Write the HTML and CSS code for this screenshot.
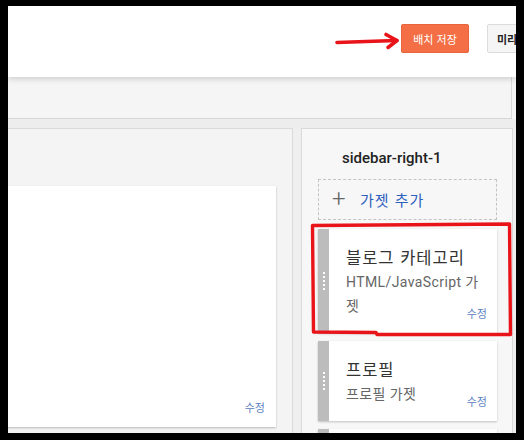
FILE: index.html
```html
<!DOCTYPE html>
<html lang="ko">
<head>
<meta charset="utf-8">
<title>레이아웃</title>
<link rel="stylesheet" href="styles.css">
</head>
<body>
<div class="frame">
  <header class="header">
    <button class="btn btn-save">배치 저장</button>
    <button class="btn btn-preview">미리보기</button>
  </header>
  <div class="toolbar"></div>
  <div class="band"></div>
  <div class="columns">
    <section class="main-panel">
      <div class="main-card">
        <a class="edit">수정</a>
      </div>
    </section>
    <aside class="sidebar">
      <h2 class="sidebar-title">sidebar-right-1</h2>
      <div class="add-gadget"><span class="plus">+</span><span class="add-text">가젯 추가</span></div>
      <div class="widget">
        <div class="handle"><span class="dots"></span></div>
        <div class="widget-body">
          <div class="widget-title">블로그 카테고리</div>
          <div class="widget-sub">HTML/JavaScript 가젯</div>
        </div>
        <a class="edit">수정</a>
      </div>
      <div class="widget">
        <div class="handle"><span class="dots"></span></div>
        <div class="widget-body">
          <div class="widget-title">프로필</div>
          <div class="widget-sub">프로필 가젯</div>
        </div>
        <a class="edit">수정</a>
      </div>
      <div class="widget">
        <div class="handle"><span class="dots"></span></div>
        <div class="widget-body">
          <div class="widget-title">&nbsp;</div>
          <div class="widget-sub">&nbsp;</div>
        </div>
      </div>
    </aside>
  </div>
  <svg class="annot" width="508" height="427" viewBox="0 0 508 427">
    <path d="M329 36.5 L358 35.5 L389 34.5" fill="none" stroke="#e8141a" stroke-width="3.6" stroke-linecap="round"/>
    <path d="M378 28.5 L389 34.5 L380 41.5" fill="none" stroke="#e8141a" stroke-width="3.6" stroke-linecap="round" stroke-linejoin="round"/>
    <path d="M304.5 219.5 L501.5 218 L502.5 328.5 L369 328.5 L368 326.5 L305.5 326 Z" fill="none" stroke="#e8141a" stroke-width="3.4" stroke-linejoin="round"/>
  </svg>
</div>
</body>
</html>
```

FILE: styles.css
```css
* { box-sizing: border-box; }
html, body { margin: 0; padding: 0; }
body {
  background: #000;
  width: 524px;
  height: 440px;
  overflow: hidden;
  font-family: Roboto, "Noto Sans CJK KR", sans-serif;
}
.frame {
  position: relative;
  margin: 6px 8px 0 8px;
  width: 508px;
  height: 427px;
  overflow: hidden;
  background: #f5f5f5;
}
.header {
  position: relative;
  z-index: 2;
  height: 71px;
  background: #fff;
  box-shadow: 0 2px 6px rgba(0,0,0,0.16);
  display: flex;
  align-items: flex-start;
  gap: 18px;
  padding: 18px 0 0 393px;
  white-space: nowrap;
}
.btn {
  flex: none;
  height: 29px;
  border-radius: 2px;
  font-family: "Noto Sans CJK KR", sans-serif;
  font-size: 11px;
  padding: 0;
  cursor: pointer;
}
.btn-save {
  width: 68px;
  background: #f46f45;
  border: 1px solid #e8643a;
  color: #fff;
}
.btn-preview {
  width: 64px;
  background: #f5f5f5;
  border: 1px solid #dcdcdc;
  color: #222;
  font-weight: 700;
  text-align: left;
  padding-left: 9px;
}
.toolbar {
  width: 504px;
  height: 42px;
  border-right: 1px solid #d9d9d9;
  border-bottom: 1px solid #d6d6d6;
  background: #f5f5f5;
}
.band {
  height: 9px;
  background: #ededed;
}
.columns {
  display: flex;
  gap: 8px;
  background: #efefef;
  height: 320px;
}
.main-panel {
  width: 285px;
  flex: none;
  border-top: 1px solid #dadada;
  border-right: 1px solid #dadada;
  background: #f4f4f4;
  padding-top: 57px;
}
.main-card {
  position: relative;
  margin-left: -20px;
  width: 288px;
  height: 241px;
  background: #fff;
  box-shadow: 0 1px 2px rgba(0,0,0,0.25);
}
.main-card .edit { right: 11px; bottom: 13px; }
.sidebar {
  width: 212px;
  flex: none;
  border: 1px solid #dadada;
  border-bottom: none;
  background: #f7f7f7;
  padding: 0 15px 0 16px;
}
.sidebar-title {
  margin: 19px 0 0 24px;
  font-size: 15px;
  line-height: 20px;
  font-weight: 500;
  color: #222;
}
.add-gadget {
  margin-top: 11px;
  height: 41px;
  border: 1px dashed #c4c4c4;
  display: flex;
  align-items: center;
  padding-left: 13px;
}
.plus {
  font-size: 24px;
  font-weight: 300;
  color: #666;
  line-height: 1;
  width: 28px;
  margin-top: -2px;
}
.add-text {
  font-family: "Noto Sans CJK KR", sans-serif;
  font-size: 15px;
  letter-spacing: 1px;
  color: #2e5fbd;
}
.widget {
  position: relative;
  display: flex;
  margin-top: 9px;
  background: #fff;
  box-shadow: 0 1px 2px rgba(0,0,0,0.22);
}
.widget + .widget { margin-top: 8px; }
.handle {
  flex: none;
  width: 11px;
  background: #bcbcbc;
  display: flex;
  align-items: center;
  justify-content: center;
}
.dots {
  width: 2px;
  height: 18px;
  background: repeating-linear-gradient(to bottom, #fff 0 2px, transparent 2px 4px);
}
.widget-body {
  padding: 16px 14px 15px 17px;
  min-width: 0;
  flex: 1;
}
.widget-title {
  font-family: "Noto Sans CJK KR", sans-serif;
  font-size: 16.5px;
  line-height: 24px;
  letter-spacing: 1px;
  color: #333;
  margin-bottom: 1px;
}
.widget-sub {
  font-family: Roboto, "Noto Sans CJK KR", sans-serif;
  font-size: 14px;
  line-height: 24px;
  letter-spacing: 0.4px;
  color: #666;
  word-break: break-all;
}
.edit {
  position: absolute;
  right: 10px;
  bottom: 13px;
  font-family: "Noto Sans CJK KR", sans-serif;
  font-size: 11px;
  line-height: 14px;
  color: #5a80c0;
}
.annot {
  position: absolute;
  left: 0;
  top: 0;
  z-index: 5;
  pointer-events: none;
}
```
